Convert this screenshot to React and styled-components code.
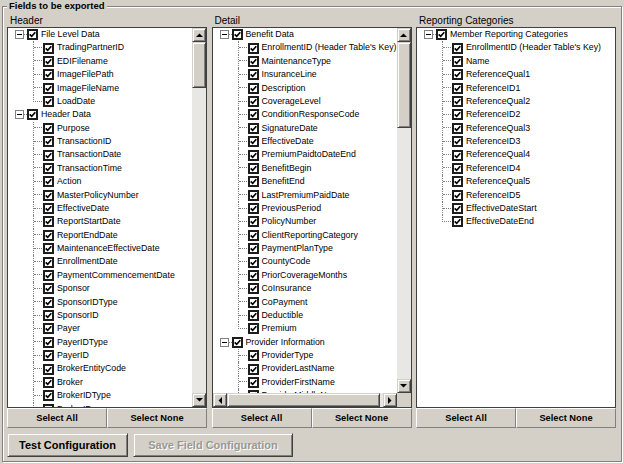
import React from "react";
import styled, { createGlobalStyle, css } from "styled-components";

const GlobalStyle = createGlobalStyle`
  html, body {
    margin: 0;
    padding: 0;
  }
  body {
    width: 624px;
    height: 464px;
    overflow: hidden;
    background: #d4d0c8;
    font-family: "Liberation Sans", Arial, sans-serif;
  }
`;

const raised = css`
  border: 1px solid;
  border-color: #d4d0c8 #404040 #404040 #d4d0c8;
  box-shadow: inset 1px 1px 0 #fff, inset -1px -1px 0 #808080;
`;

const ROW_H = 13.375;

const Frame = styled.div`
  width: 624px;
  height: 464px;
  box-sizing: border-box;
  padding: 0 2px;
  background: #d4d0c8;
`;

const GroupBox = styled.fieldset`
  margin: 0;
  width: 620px;
  box-sizing: border-box;
  padding: 2px 5px 4px 4px;
  border: 1px solid #808080;
  box-shadow: inset 1px 1px 0 #fff, 1px 1px 0 #fff;
`;

const Legend = styled.legend`
  padding: 0 2px;
  font-size: 9.5px;
  line-height: 12px;
  font-weight: bold;
  color: #000;
  background: #d4d0c8;
`;

const Columns = styled.div`
  display: grid;
  grid-template-columns: repeat(3, 1fr);
  column-gap: 4.5px;
`;

const Column = styled.div`
  display: flex;
  flex-direction: column;
  min-width: 0;
`;

const ColumnLabel = styled.div`
  height: 13px;
  line-height: 13px;
  font-size: 10px;
  padding-left: 3px;
  color: #000;
  white-space: nowrap;
`;

const TreeBox = styled.div`
  height: 381px;
  box-sizing: border-box;
  border: 1px solid #404040;
  background: #fff;
  display: grid;
  grid-template-columns: ${(p) => (p.$vscroll ? "1fr 14px" : "1fr")};
  grid-template-rows: ${(p) => (p.$hscroll ? "1fr 14px" : "1fr")};
  overflow: hidden;
`;

const TreeList = styled.div`
  min-width: 0;
  min-height: 0;
  overflow: hidden;
`;

const Row = styled.div`
  height: ${ROW_H}px;
  display: flex;
  align-items: center;
  white-space: nowrap;
  padding-left: ${(p) => (p.$child ? 25 : 7)}px;
  font-size: 8.8px;
  color: #000;
`;

const Expander = styled.div`
  width: 9px;
  height: 9px;
  box-sizing: border-box;
  border: 1px solid #808080;
  background: #fff;
  display: flex;
  align-items: center;
  justify-content: center;
  flex: none;

  &::after {
    content: "";
    width: 5px;
    height: 1px;
    background: #000;
  }
`;

const Dash = styled.div`
  width: 3px;
  border-top: 1px dotted #808080;
  flex: none;
`;

const Connector = styled.div`
  align-self: stretch;
  width: 9px;
  box-sizing: border-box;
  border-left: ${(p) => (p.$last ? "none" : "1px dotted #808080")};
  flex: none;
`;

const Stub = styled.div`
  height: 50%;
  box-sizing: border-box;
  border-bottom: 1px dotted #808080;
  border-left: ${(p) => (p.$last ? "1px dotted #808080" : "none")};
`;

const Check = styled.div`
  width: 11px;
  height: 11px;
  box-sizing: border-box;
  border: 2px solid #1c1c1c;
  background: #fff;
  margin-left: ${(p) => (p.$child ? 1 : 0)}px;
  display: flex;
  align-items: center;
  justify-content: center;
  flex: none;
`;

const ItemText = styled.span`
  margin-left: 3px;
  line-height: ${ROW_H}px;
`;

const VBar = styled.div`
  display: flex;
  flex-direction: column;
  background: #e9e7e3;
  min-height: 0;
`;

const HBar = styled.div`
  display: flex;
  background: #e9e7e3;
  min-width: 0;
`;

const Corner = styled.div`
  background: #d4d0c8;
`;

const ArrowBtn = styled.div`
  ${raised};
  width: 14px;
  height: 14px;
  box-sizing: border-box;
  background: #d4d0c8;
  display: flex;
  align-items: center;
  justify-content: center;
  flex: none;
`;

const Track = styled.div`
  flex: 1;
  display: flex;
  flex-direction: ${(p) => (p.$horizontal ? "row" : "column")};
  min-width: 0;
  min-height: 0;
`;

const Thumb = styled.div`
  ${raised};
  box-sizing: border-box;
  background: #d4d0c8;
  flex: none;
  ${(p) =>
    p.$horizontal
      ? css`
          width: ${p.$size}px;
        `
      : css`
          height: ${p.$size}px;
        `}
`;

const ButtonBar = styled.div`
  display: grid;
  grid-template-columns: 1fr 1fr;
  height: 20px;
`;

const BarButton = styled.button`
  margin: 0;
  padding: 0;
  border: 1px solid;
  border-color: #fff #808080 #808080 #fff;
  background: #d4d0c8;
  font-family: "Liberation Sans", Arial, sans-serif;
  font-size: 9.3px;
  line-height: 18px;
  font-weight: bold;
  color: #000;
`;

const ActionRow = styled.div`
  display: flex;
  gap: 5px;
  margin-top: 5px;
`;

const ActionButton = styled.button`
  ${raised};
  margin: 0;
  padding: 0;
  width: ${(p) => p.$width}px;
  height: 24px;
  background: #d4d0c8;
  font-family: "Liberation Sans", Arial, sans-serif;
  font-size: 11px;
  font-weight: bold;
  color: ${(p) => (p.disabled ? "#999894" : "#000")};
  text-shadow: ${(p) => (p.disabled ? "1px 1px 0 #fff" : "none")};
`;

const Arrow = ({ dir }) => {
  const pts = {
    up: "0,4 3.5,0.5 7,4",
    down: "0,0 3.5,3.5 7,0",
    left: "4,0 0.5,3.5 4,7",
    right: "0,0 3.5,3.5 0,7",
  }[dir];
  const w = dir === "up" || dir === "down" ? 7 : 4;
  const h = dir === "up" || dir === "down" ? 4 : 7;
  return (
    <svg width={w} height={h} viewBox={`0 0 ${w} ${h}`}>
      <polygon points={pts} fill="#000" />
    </svg>
  );
};

const CheckMark = () => (
  <svg width="7" height="7" viewBox="0 0 7 7">
    <path d="M0.7 3.3 L2.7 5.3 L6.3 1.2" stroke="#000" strokeWidth="1.7" fill="none" />
  </svg>
);

const VScroll = ({ offset, size }) => (
  <VBar>
    <ArrowBtn>
      <Arrow dir="up" />
    </ArrowBtn>
    <Track style={{ paddingTop: offset }}>
      <Thumb $size={size} />
    </Track>
    <ArrowBtn>
      <Arrow dir="down" />
    </ArrowBtn>
  </VBar>
);

const HScroll = ({ offset, size }) => (
  <HBar>
    <ArrowBtn>
      <Arrow dir="left" />
    </ArrowBtn>
    <Track $horizontal style={{ paddingLeft: offset }}>
      <Thumb $horizontal $size={size} />
    </Track>
    <ArrowBtn>
      <Arrow dir="right" />
    </ArrowBtn>
  </HBar>
);

const Tree = ({ groups }) => (
  <TreeList>
    {groups.map((g) => (
      <React.Fragment key={g.label}>
        <Row>
          <Expander />
          <Dash />
          <Check>
            <CheckMark />
          </Check>
          <ItemText>{g.label}</ItemText>
        </Row>
        {g.children.map((c, i) => {
          const last = g.closed && i === g.children.length - 1;
          return (
            <Row $child key={c}>
              <Connector $last={last}>
                <Stub $last={last} />
              </Connector>
              <Check $child>
                <CheckMark />
              </Check>
              <ItemText>{c}</ItemText>
            </Row>
          );
        })}
      </React.Fragment>
    ))}
  </TreeList>
);

const headerGroups = [
  {
    label: "File Level Data",
    closed: true,
    children: ["TradingPartnerID", "EDIFilename", "ImageFilePath", "ImageFileName", "LoadDate"],
  },
  {
    label: "Header Data",
    children: [
      "Purpose",
      "TransactionID",
      "TransactionDate",
      "TransactionTime",
      "Action",
      "MasterPolicyNumber",
      "EffectiveDate",
      "ReportStartDate",
      "ReportEndDate",
      "MaintenanceEffectiveDate",
      "EnrollmentDate",
      "PaymentCommencementDate",
      "Sponsor",
      "SponsorIDType",
      "SponsorID",
      "Payer",
      "PayerIDType",
      "PayerID",
      "BrokerEntityCode",
      "Broker",
      "BrokerIDType",
      "BrokerID",
    ],
  },
];

const detailGroups = [
  {
    label: "Benefit Data",
    closed: true,
    children: [
      "EnrollmentID (Header Table's Key)",
      "MaintenanceType",
      "InsuranceLine",
      "Description",
      "CoverageLevel",
      "ConditionResponseCode",
      "SignatureDate",
      "EffectiveDate",
      "PremiumPaidtoDateEnd",
      "BenefitBegin",
      "BenefitEnd",
      "LastPremiumPaidDate",
      "PreviousPeriod",
      "PolicyNumber",
      "ClientReportingCategory",
      "PaymentPlanType",
      "CountyCode",
      "PriorCoverageMonths",
      "CoInsurance",
      "CoPayment",
      "Deductible",
      "Premium",
    ],
  },
  {
    label: "Provider Information",
    children: ["ProviderType", "ProviderLastName", "ProviderFirstName", "ProviderMiddleName"],
  },
];

const reportingGroups = [
  {
    label: "Member Reporting Categories",
    closed: true,
    children: [
      "EnrollmentID (Header Table's Key)",
      "Name",
      "ReferenceQual1",
      "ReferenceID1",
      "ReferenceQual2",
      "ReferenceID2",
      "ReferenceQual3",
      "ReferenceID3",
      "ReferenceQual4",
      "ReferenceID4",
      "ReferenceQual5",
      "ReferenceID5",
      "EffectiveDateStart",
      "EffectiveDateEnd",
    ],
  },
];

const SelectButtons = () => (
  <ButtonBar>
    <BarButton>Select All</BarButton>
    <BarButton>Select None</BarButton>
  </ButtonBar>
);

export default function App() {
  return (
    <Frame>
      <GlobalStyle />
      <GroupBox>
        <Legend>Fields to be exported</Legend>
        <Columns>
          <Column>
            <ColumnLabel>Header</ColumnLabel>
            <TreeBox $vscroll>
              <Tree groups={headerGroups} />
              <VScroll offset={0} size={46} />
            </TreeBox>
            <SelectButtons />
          </Column>
          <Column>
            <ColumnLabel>Detail</ColumnLabel>
            <TreeBox $vscroll $hscroll>
              <Tree groups={detailGroups} />
              <VScroll offset={0} size={86} />
              <HScroll offset={0} size={153} />
              <Corner />
            </TreeBox>
            <SelectButtons />
          </Column>
          <Column>
            <ColumnLabel>Reporting Categories</ColumnLabel>
            <TreeBox>
              <Tree groups={reportingGroups} />
            </TreeBox>
            <SelectButtons />
          </Column>
        </Columns>
        <ActionRow>
          <ActionButton $width={121}>Test Configuration</ActionButton>
          <ActionButton $width={160} disabled>
            Save Field Configuration
          </ActionButton>
        </ActionRow>
      </GroupBox>
    </Frame>
  );
}
